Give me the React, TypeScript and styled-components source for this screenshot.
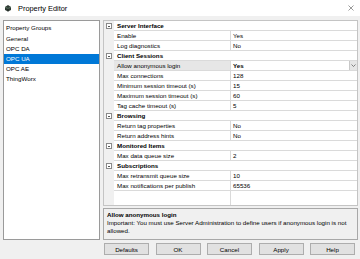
import React from "react";
import styled, { createGlobalStyle } from "styled-components";

const GlobalStyle = createGlobalStyle`
  html, body {
    margin: 0;
    padding: 0;
    background: #f0f0f0;
  }
  body {
    font-family: "Liberation Sans", Arial, sans-serif;
    font-size: 6.2px;
    color: #000;
  }
`;

type Prop = { name: string; value: string; selected?: boolean };
type Category = { title: string; props: Prop[] };

const groups = ["General", "OPC DA", "OPC UA", "OPC AE", "ThingWorx"];

const categories: Category[] = [
  {
    title: "Server Interface",
    props: [
      { name: "Enable", value: "Yes" },
      { name: "Log diagnostics", value: "No" },
    ],
  },
  {
    title: "Client Sessions",
    props: [
      { name: "Allow anonymous login", value: "Yes", selected: true },
      { name: "Max connections", value: "128" },
      { name: "Minimum session timeout (s)", value: "15" },
      { name: "Maximum session timeout (s)", value: "60" },
      { name: "Tag cache timeout (s)", value: "5" },
    ],
  },
  {
    title: "Browsing",
    props: [
      { name: "Return tag properties", value: "No" },
      { name: "Return address hints", value: "No" },
    ],
  },
  {
    title: "Monitored Items",
    props: [{ name: "Max data queue size", value: "2" }],
  },
  {
    title: "Subscriptions",
    props: [
      { name: "Max retransmit queue size", value: "10" },
      { name: "Max notifications per publish", value: "65536" },
    ],
  },
];

const buttons = ["Defaults", "OK", "Cancel", "Apply", "Help"];

const App = () => {
  return (
    <Window>
      <GlobalStyle />
      <TitleBar>
        <AppIcon width="8" height="8" viewBox="0 0 8 8">
          <path d="M1 3 L4 1 L7 3 L7 6 L4 7.5 L1 6 Z" fill="#2f3a33" />
          <path d="M1 3 L4 4.5 L7 3" fill="none" stroke="#6f8f78" strokeWidth="0.7" />
          <path d="M4 4.5 L4 7.5" stroke="#1a201c" strokeWidth="0.7" />
        </AppIcon>
        <Title>Property Editor</Title>
        <CloseButton width="6" height="6" viewBox="0 0 6 6">
          <path d="M0.5 0.5 L5.5 5.5 M5.5 0.5 L0.5 5.5" stroke="#555" strokeWidth="0.6" />
        </CloseButton>
      </TitleBar>

      <Main>
        <GroupList>
          <GroupHeader>Property Groups</GroupHeader>
          {groups.map((g) => (
            <GroupItem key={g} selected={g === "OPC UA"}>
              {g}
            </GroupItem>
          ))}
        </GroupList>

        <RightColumn>
          <Grid>
            {categories.map((cat) => (
              <React.Fragment key={cat.title}>
                <CategoryRow>
                  <Gutter>
                    <Collapse />
                  </Gutter>
                  <CategoryLabel>{cat.title}</CategoryLabel>
                </CategoryRow>
                {cat.props.map((p) => (
                  <PropRow key={p.name}>
                    <Gutter />
                    <NameCell selected={p.selected}>{p.name}</NameCell>
                    <ValueCell selected={p.selected}>
                      <span>{p.value}</span>
                      {p.selected && (
                        <DropButton>
                          <svg width="5" height="3" viewBox="0 0 5 3">
                            <path d="M0.5 0.5 L2.5 2.5 L4.5 0.5" fill="none" stroke="#555" strokeWidth="0.7" />
                          </svg>
                        </DropButton>
                      )}
                    </ValueCell>
                  </PropRow>
                ))}
              </React.Fragment>
            ))}
            <Filler>
              <Gutter />
              <FillerName />
              <FillerValue />
            </Filler>
          </Grid>

          <Description>
            <DescTitle>Allow anonymous login</DescTitle>
            <DescText>
              Important: You must use Server Administration to define users if anonymous login is not
              allowed.
            </DescText>
          </Description>
        </RightColumn>
      </Main>

      <ButtonRow>
        {buttons.map((b) => (
          <Button key={b}>{b}</Button>
        ))}
      </ButtonRow>
    </Window>
  );
};

export default App;

const Window = styled.div`
  width: 360px;
  height: 259px;
  display: flex;
  flex-direction: column;
  background: #f0f0f0;
  overflow: hidden;
`;

const TitleBar = styled.div`
  height: 16px;
  background: #fff;
  display: flex;
  align-items: center;
  padding: 0 6px 0 4px;
`;

const AppIcon = styled.svg`
  flex: none;
`;

const Title = styled.div`
  margin-left: 6px;
  font-size: 7.4px;
  flex: 1;
`;

const CloseButton = styled.svg`
  flex: none;
`;

const Main = styled.div`
  display: flex;
  gap: 3px;
  height: 220px;
  padding: 4px 2px 0 3px;
`;

const GroupList = styled.div`
  width: 97px;
  flex: none;
  box-sizing: border-box;
  background: #fff;
  border: 1px solid #9a9a9a;
  padding: 1px 0;
  display: flex;
  flex-direction: column;
`;

const GroupHeader = styled.div`
  height: 12px;
  line-height: 12px;
  padding-left: 2px;
`;

const GroupItem = styled.div<{ selected?: boolean }>`
  height: 10px;
  line-height: 10px;
  padding-left: 2px;
  background: ${(p) => (p.selected ? "#0078d7" : "transparent")};
  color: ${(p) => (p.selected ? "#fff" : "#000")};
`;

const RightColumn = styled.div`
  flex: 1;
  display: flex;
  flex-direction: column;
  gap: 2px;
  min-width: 0;
`;

const Grid = styled.div`
  height: 186px;
  box-sizing: border-box;
  border: 1px solid #c4c4c4;
  background: #fff;
  display: flex;
  flex-direction: column;
`;

const Row = styled.div`
  display: flex;
  height: 10px;
  flex: none;
`;

const CategoryRow = styled(Row)``;

const PropRow = styled(Row)``;

const Gutter = styled.div`
  width: 10px;
  flex: none;
  background: #f0f0f0;
  display: flex;
  align-items: center;
  justify-content: center;
`;

const Collapse = styled.div`
  position: relative;
  width: 4.5px;
  height: 4.5px;
  border: 0.7px solid #8a8a8a;
  background: #fff;
  &::after {
    content: "";
    position: absolute;
    left: 0.9px;
    right: 0.9px;
    top: 1.9px;
    height: 0.7px;
    background: #555;
  }
`;

const CategoryLabel = styled.div`
  flex: 1;
  font-weight: bold;
  padding-left: 3px;
  line-height: 10px;
  border-bottom: 1px solid #dadada;
  box-sizing: border-box;
`;

const NameCell = styled.div<{ selected?: boolean }>`
  width: 117px;
  flex: none;
  box-sizing: border-box;
  padding-left: 3px;
  line-height: 9px;
  border-bottom: 1px solid #dadada;
  border-right: 1px solid #dadada;
  background: ${(p) => (p.selected ? "#e6e6e6" : "#fff")};
  white-space: nowrap;
  overflow: hidden;
`;

const ValueCell = styled.div<{ selected?: boolean }>`
  flex: 1;
  box-sizing: border-box;
  padding-left: 2px;
  line-height: 9px;
  border-bottom: 1px solid #dadada;
  font-weight: ${(p) => (p.selected ? "bold" : "normal")};
  display: flex;
  justify-content: space-between;
`;

const DropButton = styled.div`
  width: 8px;
  height: 9px;
  box-sizing: border-box;
  background: #e6e6e6;
  border-left: 1px solid #c8c8c8;
  display: flex;
  align-items: center;
  justify-content: center;
`;

const Filler = styled.div`
  flex: 1;
  display: flex;
`;

const FillerName = styled.div`
  width: 117px;
  flex: none;
  box-sizing: border-box;
  border-right: 1px solid #dadada;
`;

const FillerValue = styled.div`
  flex: 1;
`;

const Description = styled.div`
  height: 32px;
  box-sizing: border-box;
  border: 1px solid #a8a8a8;
  background: #f0f0f0;
  padding: 2px 3px;
`;

const DescTitle = styled.div`
  font-weight: bold;
  line-height: 8px;
`;

const DescText = styled.div`
  line-height: 7.5px;
`;

const ButtonRow = styled.div`
  display: flex;
  gap: 6.5px;
  padding: 3px 0 0 104px;
`;

const Button = styled.div`
  width: 45px;
  height: 12px;
  box-sizing: border-box;
  background: #e1e1e1;
  border: 1px solid #adadad;
  display: flex;
  align-items: center;
  justify-content: center;
`;
